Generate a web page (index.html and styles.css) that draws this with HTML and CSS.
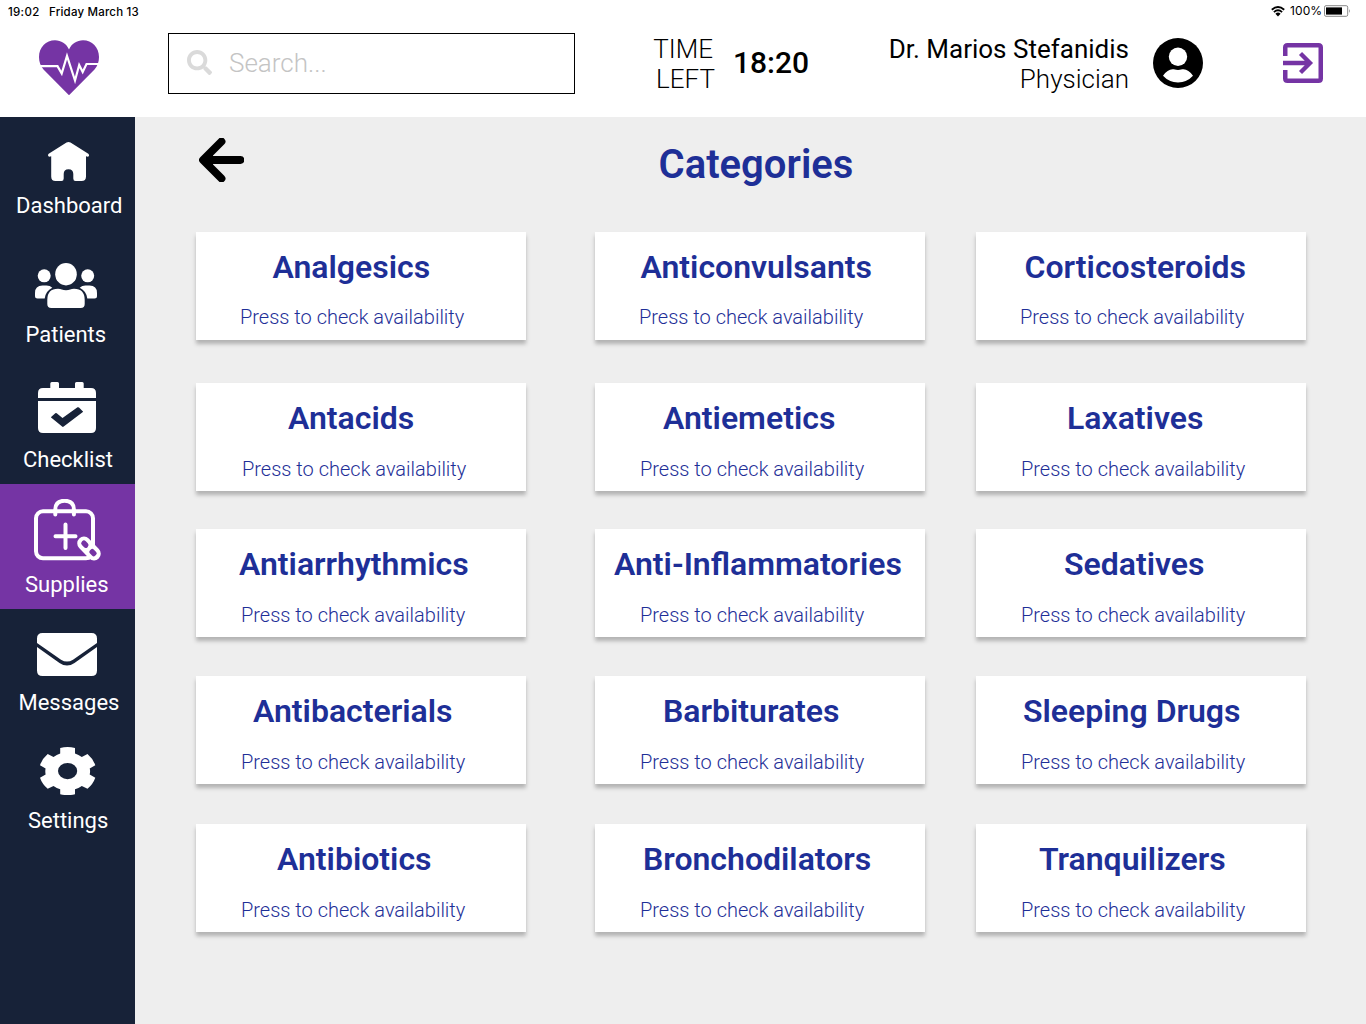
FILE: index.html
```html
<!DOCTYPE html>
<html lang="en">
<head>
<meta charset="utf-8">
<title>Categories</title>
<link rel="stylesheet" href="styles.css">
</head>
<body>
<div class="status">
  <span class="clock">19:02</span><span class="date">Friday March 13</span>
  <svg class="wifi" viewBox="0 0 14 11" width="14" height="11"><path d="M.8 3.7Q7-1.6 13.2 3.7M2.9 6.1Q7 2.6 11.1 6.1" fill="none" stroke="#000" stroke-width="1.9"/><path d="M4.4 7.7Q7 5.5 9.6 7.7L7 10.6Z"/></svg>
  <span class="percent">100%</span>
  <svg class="battery" viewBox="0 0 28 12" width="28" height="12"><rect x=".5" y=".7" width="23.2" height="10.6" rx="1.5" fill="#fff" stroke="#888"/><rect x="2" y="2.4" width="16" height="7.2"/><path d="M25 4q1.8 2 0 4z" fill="#888"/></svg>
</div>
<header class="topbar">
  <svg class="logo" viewBox="39 40 60 56" width="60" height="56"><path fill="#7534a4" d="M69 95.3 43.5 69.5C40.5 66 39 62 39 57c0-9.500 7-16.700 16-16.700 6 0 11.500 3.500 14 9.200 2.500-5.700 8-9.200 14-9.200 9 0 16 7.200 16 16.700 0 5-1.500 9-4.500 12.500Z"/><path d="M40 66.200H57.500L61.700 73.500 67 56 75 80.500 79.200 65 82.700 72 86.500 64H99" fill="none" stroke="#fff" stroke-width="2.200"/></svg>
  <div class="search">
    <svg viewBox="0 0 512 512" width="25" height="25"><path fill="#dadada" d="M505 442.700 405.300 343c-4.500-4.500-10.600-7-17-7H372c27.600-35.300 44-79.700 44-128C416 93.100 322.900 0 208 0S0 93.100 0 208s93.100 208 208 208c48.300 0 92.700-16.400 128-44v16.300c0 6.400 2.500 12.500 7 17l99.700 99.700c9.400 9.400 24.600 9.400 33.900 0l28.300-28.300c9.400-9.400 9.400-24.600.1-34zM208 336c-70.700 0-128-57.200-128-128 0-70.700 57.200-128 128-128 70.700 0 128 57.200 128 128 0 70.700-57.200 128-128 128z"/></svg>
    <span>Search...</span>
  </div>
  <div class="time-label"><span class="time-word">TIME</span><span>LEFT</span></div>
  <div class="time">18:20</div>
  <div class="user"><span class="name">Dr. Marios Stefanidis</span><span>Physician</span></div>
  <svg class="avatar" viewBox="0 0 50 50" width="50" height="50"><circle cx="25" cy="25" r="25"/><ellipse cx="25" cy="18.800" rx="9.200" ry="9.200" fill="#fff"/><path fill="#fff" d="M10 37.800Q14.500 31.300 19.500 31.300C21.500 31.300 22 32 25 32S28.500 31.300 30.500 31.300Q35.500 31.300 40 37.800Q34 44.400 25 44.400T10 37.800Z"/></svg>
  <svg class="exit" viewBox="0 0 40 40" width="40" height="40"><g fill="none" stroke="#7534a4"><path stroke-width="4.500" d="M2.250 13V4.500Q2.250 2.250 4.500 2.250H35.500Q37.750 2.250 37.750 4.500V35.500Q37.750 37.750 35.500 37.750H4.500Q2.250 37.750 2.250 35.500V27"/><path stroke-width="4.300" d="M0 20H27M17.500 10.500 27 20 17.500 29.500"/></g></svg>
</header>
<div class="body">
<nav class="sidebar">
  <a class="item home"><svg viewBox="47 141 43 41" width="43" height="41"><path fill="#fff" d="M66.500 142.600Q68.500 141.400 70.500 142.600L88.300 153.700Q89.700 155 88.800 156.300 88 157 86 156.300V176.500Q86 181 81.500 181H75.500Q73.300 181 73.300 178.500V174Q73.300 169.300 68.500 169.300T63.700 174V178.500Q63.700 181 61.500 181H55.500Q51.200 181 51.200 176.500V156.300Q49.200 157 48.400 156.300 47.300 155 48.700 153.700Z"/></svg><span>Dashboard</span></a>
  <a class="item patients"><svg viewBox="35 263 62 45" width="62" height="45"><g fill="#fff"><ellipse cx="66" cy="274.200" rx="10.800" ry="11.200"/><circle cx="44.200" cy="275.800" r="6.500"/><circle cx="87.700" cy="275.800" r="6.500"/><path d="M47.300 304V300Q47.300 288.800 58 288.800C61 288.800 62.500 290.200 66 290.200S71 288.800 74 288.800Q84.700 288.800 84.700 300V304Q84.700 308 80.700 308H51.300Q47.300 308 47.300 304Z"/><path d="M37.500 298.500Q35 298.500 35 296V293Q35 285.500 42.500 285.500H46.500Q50 285.500 52.300 287.700Q45.500 291 44.700 298.500ZM94.500 298.500Q97 298.500 97 296V293Q97 285.500 89.500 285.500H85.500Q82 285.500 79.700 287.700Q86.500 291 87.300 298.500Z"/></g></svg><span>Patients</span></a>
  <a class="item checklist"><svg viewBox="38 382 58 51" width="58" height="51"><path fill="#fff" d="M38 398V393Q38 388 43 388H50.300V383.500Q50.300 382 51.800 382H57.500Q59 382 59 383.500V388H75V383.500Q75 382 76.500 382H82.200Q83.700 382 83.700 383.500V388H91Q96 388 96 393V398ZM38 401H96V428Q96 433 91 433H43Q38 433 38 428Z"/><path fill="#172238" d="M50.800 417.200 55.300 413.200Q56 412.800 56.700 413.300L62.500 418 77.500 407.300Q78.300 406.900 79 407.500L83.200 411.700 63.700 426.600Q62.900 427.200 62.100 426.600Z"/></svg><span>Checklist</span></a>
  <a class="item supplies active"><svg viewBox="34 499 68 62" width="68" height="62"><g fill="none" stroke="#fff" stroke-width="4"><rect x="36" y="511.300" width="57" height="47" rx="7"/><path stroke-linecap="round" d="M55.300 514.500V509.500Q55.300 500.800 64.600 500.800T73.900 509.500V514.500M65.500 524.500V548M55.500 536.300H75.500"/></g><g transform="rotate(46 89 548.500)"><rect x="75" y="541.800" width="28" height="13.400" rx="6.700" fill="#fff"/><rect x="79" y="545.800" width="8" height="5.400" rx="2.600" fill="#7534a4"/><rect x="91" y="545.800" width="7.500" height="5.400" rx="2" fill="#7534a4"/></g></svg><span>Supplies</span></a>
  <a class="item messages"><svg viewBox="37 633 60 43" width="60" height="43"><path fill="#fff" d="M37 643V638.500Q37 633 42.500 633H91.500Q97 633 97 638.500V643L73 659.700Q67 663.500 61 659.700ZM37 647 59.500 663Q67 668 74.500 663L97 647V670.500Q97 676 91.500 676H42.500Q37 676 37 670.500Z"/></svg><span>Messages</span></a>
  <a class="item settings"><svg viewBox="40 747 56 48" width="56" height="48"><path fill="#fff" fill-rule="evenodd" d="M60.200 748Q67.600 746.200 75 748V753.500Q78.500 754.700 81.800 757L87.500 754Q93 758.700 95.300 765.300L89.700 768.500Q90.500 771 89.700 774.500L95.300 777.700Q93 784.200 87.500 788.700L81.800 786Q78.500 788.300 75 789.300V794.300Q67.600 796 60.200 794.300V789.300Q56.700 788.300 53.500 786L47.700 788.700Q42.200 784.200 40 777.700L45.600 774.500Q45 771 45.600 768.500L40 765.300Q42.200 758.700 47.700 754L53.500 757Q56.700 754.700 60.200 753.500ZM67.600 763A9.600 8.100 0 1 0 67.600 779.200A9.600 8.100 0 1 0 67.600 763Z"/></svg><span>Settings</span></a>
</nav>
<main>
  <div class="heading">
    <svg viewBox="199 138 45 44" width="45" height="44"><path d="M221.500 141.500 203 160 221.500 178.500M204 160H240.500" fill="none" stroke="#000" stroke-width="7.800" stroke-linecap="round" stroke-linejoin="round"/><path d="M203 160 213 151V169Z"/></svg>
    <h1>Categories</h1>
  </div>
  <div class="grid">
    <section class="card"><h2>Analgesics</h2><p>Press to check availability</p></section>
    <section class="card"><h2>Anticonvulsants</h2><p>Press to check availability</p></section>
    <section class="card"><h2>Corticosteroids</h2><p>Press to check availability</p></section>
    <section class="card"><h2>Antacids</h2><p>Press to check availability</p></section>
    <section class="card"><h2>Antiemetics</h2><p>Press to check availability</p></section>
    <section class="card"><h2>Laxatives</h2><p>Press to check availability</p></section>
    <section class="card"><h2>Antiarrhythmics</h2><p>Press to check availability</p></section>
    <section class="card"><h2>Anti-Inflammatories</h2><p>Press to check availability</p></section>
    <section class="card"><h2>Sedatives</h2><p>Press to check availability</p></section>
    <section class="card"><h2>Antibacterials</h2><p>Press to check availability</p></section>
    <section class="card"><h2>Barbiturates</h2><p>Press to check availability</p></section>
    <section class="card"><h2>Sleeping Drugs</h2><p>Press to check availability</p></section>
    <section class="card"><h2>Antibiotics</h2><p>Press to check availability</p></section>
    <section class="card"><h2>Bronchodilators</h2><p>Press to check availability</p></section>
    <section class="card"><h2>Tranquilizers</h2><p>Press to check availability</p></section>
  </div>
</main>
</div>
</body>
</html>
```
FILE: styles.css
```css
* { box-sizing: border-box; margin: 0; padding: 0; }
body { width: 1366px; height: 1024px; overflow: hidden; background: #fff; color: #000; font-family: Roboto, sans-serif; }
svg { display: block; flex: none; }
span, h1, h2, p { white-space: nowrap; }

.status { display: flex; height: 24px; padding-left: 8px; font: 500 11.5px/24px Inter, sans-serif; }
.clock { width: 41px; letter-spacing: .3px; }
.date { width: 1222px; letter-spacing: .2px; }
.wifi { margin: 6px 5px 0 0; }
.percent { width: 34px; font-weight: 400; font-size: 12px; line-height: 22px; letter-spacing: .1px; }
.battery { margin-top: 5px; }

.topbar { display: flex; height: 93px; padding-left: 39px; font-size: 26px; line-height: 30px; font-weight: 300; }
.logo { margin: 16px 69px 0 0; }
.search { display: flex; width: 407px; height: 61px; margin-top: 9px; padding: 16px 0 0 18px; border: 1px solid #000; }
.search span { margin-left: 17px; line-height: 26px; color: #c4c4c4; }
.time-label { display: flex; flex-direction: column; align-items: flex-end; width: 79px; margin: 10px 18px 0 61px; }
.time-word { margin-right: 2px; }
.time { width: 99px; margin-top: 24px; font-size: 30px; font-weight: 500; }
.user { display: flex; flex-direction: column; align-items: flex-end; width: 297px; margin: 10px 24px 0 0; }
.name { font-weight: 400; }
.avatar { margin: 14px 80px 0 0; }
.exit { margin-top: 19px; }

.body { display: flex; height: 907px; }
.sidebar { width: 135px; flex: none; background: #172238; color: #fff; }
.item { display: flex; flex-direction: column; font-size: 22px; line-height: 26px; }
.home { height: 122px; padding: 24px 0 0 47px; }
.home span { margin: 11px 0 0 -31px; }
.patients { height: 122px; padding: 24px 0 0 35px; }
.patients span { margin: 14px 0 0 -9.5px; }
.checklist { height: 123px; padding: 21px 0 0 38px; }
.checklist span { margin: 14px 0 0 -15px; }
.supplies { height: 125px; padding: 15px 0 0 34px; }
.supplies span { margin: 11px 0 0 -9px; }
.active { background: #7534a4; }
.messages { height: 126px; padding: 24px 0 0 37px; }
.messages span { margin: 14px 0 0 -18.5px; }
.settings { padding: 12px 0 0 40px; }
.settings span { margin: 13px 0 0 -12px; }

main { flex: 1; background: #eee; color: #1e2f97; }
.heading { display: flex; height: 115px; padding: 21px 0 0 64px; }
h1 { margin: 3px 0 0 414.5px; font-size: 40px; line-height: 48px; font-weight: 600; }
.grid { display: grid; grid-template-columns: 399px 381px 330px; grid-template-rows: 151px 146px 147px 148px 108px; padding-left: 61px; }
.card { width: 330px; height: 108px; background: #fff; box-shadow: 0 4px 4px rgba(0, 0, 0, .25); }
.card h2 { padding: 16px 0 0 var(--title-left); font-size: 32px; line-height: 38px; font-weight: 600; }
.card p { padding: 20px 0 0 45px; font-size: 20px; line-height: 24px; font-weight: 300; }
.card:nth-child(-n+3) p { padding: 19px 0 0 44px; }
.card:nth-child(4) p { padding-left: 46px; }
.card:nth-child(1) { --title-left: 76.5px; }
.card:nth-child(2) { --title-left: 45.5px; }
.card:nth-child(3) { --title-left: 48.5px; }
.card:nth-child(4) { --title-left: 92px; }
.card:nth-child(5) { --title-left: 68px; }
.card:nth-child(6) { --title-left: 91px; }
.card:nth-child(7) { --title-left: 43px; }
.card:nth-child(8) { --title-left: 19px; }
.card:nth-child(9) { --title-left: 88px; }
.card:nth-child(10) { --title-left: 57px; }
.card:nth-child(11) { --title-left: 68px; }
.card:nth-child(12) { --title-left: 47px; }
.card:nth-child(13) { --title-left: 81px; }
.card:nth-child(14) { --title-left: 48px; }
.card:nth-child(15) { --title-left: 63px; }
```
